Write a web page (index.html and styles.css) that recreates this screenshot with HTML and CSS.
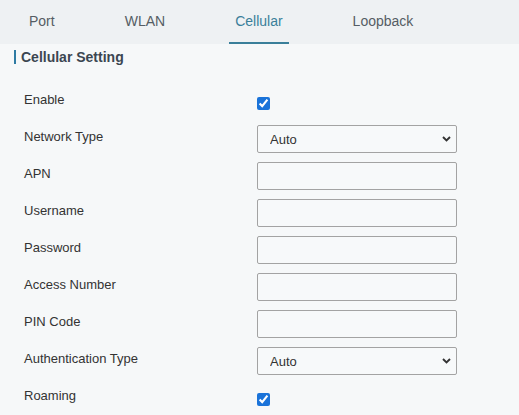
FILE: index.html
```html
<!DOCTYPE html>
<html>
<head>
<meta charset="utf-8">
<link rel="stylesheet" href="styles.css">
</head>
<body>
<nav class="tabs">
  <a class="tab">Port</a>
  <a class="tab">WLAN</a>
  <a class="tab active">Cellular</a>
  <a class="tab">Loopback</a>
</nav>
<section class="panel">
  <h2 class="section-title">Cellular Setting</h2>
  <div class="form">
    <div class="row"><label class="label">Enable</label><div class="control"><input class="check" type="checkbox" checked></div></div>
    <div class="row"><label class="label">Network Type</label><div class="control"><span class="select"><select class="field"><option>Auto</option></select><svg class="chev" width="9" height="6" viewBox="0 0 9 6"><path d="M1 1 L4.5 4.5 L8 1" fill="none" stroke="#333" stroke-width="1.9"/></svg></span></div></div>
    <div class="row"><label class="label">APN</label><div class="control"><input class="field" type="text"></div></div>
    <div class="row"><label class="label">Username</label><div class="control"><input class="field" type="text"></div></div>
    <div class="row"><label class="label">Password</label><div class="control"><input class="field" type="password"></div></div>
    <div class="row"><label class="label">Access Number</label><div class="control"><input class="field" type="text"></div></div>
    <div class="row"><label class="label">PIN Code</label><div class="control"><input class="field" type="text"></div></div>
    <div class="row"><label class="label">Authentication Type</label><div class="control"><span class="select"><select class="field"><option>Auto</option></select><svg class="chev" width="9" height="6" viewBox="0 0 9 6"><path d="M1 1 L4.5 4.5 L8 1" fill="none" stroke="#333" stroke-width="1.9"/></svg></span></div></div>
    <div class="row"><label class="label">Roaming</label><div class="control"><input class="check" type="checkbox" checked></div></div>
  </div>
</section>
</body>
</html>
```
FILE: styles.css
```css
html, body {
  margin: 0;
  padding: 0;
}
body {
  background: #f6f8f9;
  font-family: "Liberation Sans", Arial, sans-serif;
  color: #333;
  overflow: hidden;
}
.tabs {
  display: flex;
  gap: 58px;
  height: 44px;
  box-sizing: border-box;
  padding-left: 23px;
  background: #eef1f3;
}
.tab {
  display: block;
  padding: 0 6px;
  height: 44px;
  box-sizing: border-box;
  line-height: 42px;
  font-size: 14px;
  color: #555d64;
  border-bottom: 2px solid transparent;
}
.tab.active {
  color: #3a7f9a;
  border-bottom-color: #3a7f9a;
}
.panel {
  padding-top: 6px;
}
.section-title {
  margin: 0 0 24px 14px;
  padding-left: 5px;
  border-left: 2px solid #2e7ba3;
  font-size: 14px;
  line-height: 14px;
  font-weight: bold;
  color: #3b4651;
}
.form {
  display: flex;
  flex-direction: column;
  gap: 9px;
  padding-left: 24px;
}
.row {
  display: flex;
  align-items: flex-start;
  height: 28px;
}
.label {
  width: 233px;
  font-size: 13px;
  line-height: 24px;
  color: #333;
}
.control {
  width: 200px;
  height: 28px;
}
.field {
  display: block;
  width: 200px;
  height: 28px;
  box-sizing: border-box;
  margin: 0;
  border: 1px solid #a3a3a3;
  border-radius: 2px;
  background: #f7f9fa;
  font-family: "Liberation Sans", Arial, sans-serif;
  font-size: 13px;
  color: #333;
  padding: 0 12px;
  outline: none;
}
select.field {
  appearance: none;
  -webkit-appearance: none;
}
.select {
  position: relative;
  display: block;
  width: 200px;
}
.chev {
  position: absolute;
  right: 6px;
  top: 11px;
  pointer-events: none;
}
.check {
  display: block;
  width: 13px;
  height: 13px;
  margin: 9px 0 0 0;
  accent-color: #1a73d9;
}
```
